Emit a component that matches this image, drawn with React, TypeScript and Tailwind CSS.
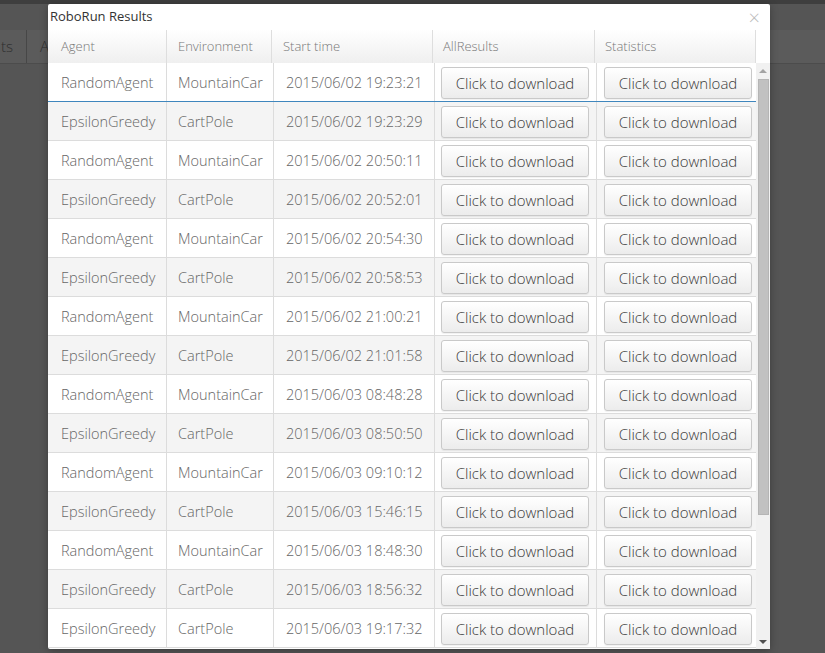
import React from "react"

const rows = [
  ["RandomAgent", "MountainCar", "2015/06/02 19:23:21"],
  ["EpsilonGreedy", "CartPole", "2015/06/02 19:23:29"],
  ["RandomAgent", "MountainCar", "2015/06/02 20:50:11"],
  ["EpsilonGreedy", "CartPole", "2015/06/02 20:52:01"],
  ["RandomAgent", "MountainCar", "2015/06/02 20:54:30"],
  ["EpsilonGreedy", "CartPole", "2015/06/02 20:58:53"],
  ["RandomAgent", "MountainCar", "2015/06/02 21:00:21"],
  ["EpsilonGreedy", "CartPole", "2015/06/02 21:01:58"],
  ["RandomAgent", "MountainCar", "2015/06/03 08:48:28"],
  ["EpsilonGreedy", "CartPole", "2015/06/03 08:50:50"],
  ["RandomAgent", "MountainCar", "2015/06/03 09:10:12"],
  ["EpsilonGreedy", "CartPole", "2015/06/03 15:46:15"],
  ["RandomAgent", "MountainCar", "2015/06/03 18:48:30"],
  ["EpsilonGreedy", "CartPole", "2015/06/03 18:56:32"],
  ["EpsilonGreedy", "CartPole", "2015/06/03 19:17:32"]
]

const DownloadButton = () => (
  <button className="w-[148px] h-[32px] pt-[1px] rounded-[3px] border border-[#c9c9c9] bg-gradient-to-b from-white to-[#ececec] text-[15px] font-light text-[#3a3a3a] shadow-[0_1px_1px_rgba(0,0,0,0.06)]">
    Click to download
  </button>
)

const App = () => {
  return (
    <div
      className="relative w-[825px] h-[653px] overflow-hidden bg-[#555555]"
      style={{ fontFamily: "'Open Sans', 'Noto Sans', sans-serif" }}
    >
      <div className="h-[4px] bg-[#3e3e3e]" />

      {/* page behind the dialog */}
      <div className="mt-[26px] flex h-[34px] bg-[#5b5b5b] border-b border-[#4c4c4c] text-[#2e2e2e] text-[15px] font-light">
        <div className="w-[27px] border-r border-[#474747] flex items-center justify-end pr-[13px] overflow-hidden">
          <span>ts</span>
        </div>
        <div className="pl-[13px] flex items-center">A</div>
      </div>

      {/* dialog */}
      <div className="absolute left-[48px] top-[4px] w-[722px] h-[645px] bg-white rounded-[2px] shadow-[0_2px_8px_rgba(0,0,0,0.3)] flex flex-col">
        <div className="relative h-[26px] flex items-center pl-[2px] text-[13px] text-[#333]">
          RoboRun Results
          <span className="absolute right-[10px] top-[4px] text-[20px] leading-[20px] text-[#bbb] font-light">×</span>
        </div>

        <div className="flex h-[33px] bg-gradient-to-b from-white to-[#efefef] text-[13px] font-light text-[#777]">
          <div className="w-[118px] pl-[13px] flex items-center">Agent</div>
          <div className="w-[105px] pl-[11px] flex items-center border-l border-[#dedede]">Environment</div>
          <div className="w-[161px] pl-[11px] flex items-center border-l border-[#dedede]">Start time</div>
          <div className="w-[162px] pl-[10px] flex items-center border-l border-[#dedede]">AllResults</div>
          <div className="w-[162px] pl-[10px] flex items-center border-l border-[#dedede] border-r">Statistics</div>
          <div className="w-[14px] bg-white" />
        </div>

        <div className="flex flex-1">
          <div className="w-[708px]">
            {rows.map((r, i) => (
              <div
                key={i}
                className={`flex h-[39px] text-[14.5px] font-light text-[#666] border-b ${
                  i === 0 ? "border-[#3f86bd]" : "border-[#dcdcdc]"
                } ${i % 2 === 1 ? "bg-[#f4f4f4]" : "bg-white"}`}
              >
                <div className="w-[118px] pl-[13px] pt-[2px] flex items-center">{r[0]}</div>
                <div className="w-[107px] pl-[11px] pt-[2px] flex items-center border-l border-[#dcdcdc]">{r[1]}</div>
                <div className="w-[161px] pl-[12px] pt-[2px] flex items-center border-l border-[#dcdcdc]">{r[2]}</div>
                <div className="w-[162px] pl-[6px] pt-[1px] flex items-center border-l border-[#dcdcdc]">
                  <DownloadButton />
                </div>
                <div className="w-[160px] pl-[7px] pt-[1px] flex items-center border-l border-[#dcdcdc]">
                  <DownloadButton />
                </div>
              </div>
            ))}
          </div>

          {/* scrollbar */}
          <div className="w-[14px] bg-[#f1f1f1] flex flex-col items-center">
            <div className="h-[16px] flex items-center justify-center">
              <div className="w-0 h-0 border-l-[4px] border-r-[4px] border-b-[4px] border-l-transparent border-r-transparent border-b-[#a3a3a3]" />
            </div>
            <div className="w-[11px] h-[436px] bg-[#c1c1c1] border border-[#b5b5b5]" />
            <div className="flex-1" />
            <div className="h-[14px] flex items-center justify-center">
              <div className="w-0 h-0 border-l-[4px] border-r-[4px] border-t-[4px] border-l-transparent border-r-transparent border-t-[#505050]" />
            </div>
          </div>
        </div>
      </div>
    </div>
  )
}

export default App
